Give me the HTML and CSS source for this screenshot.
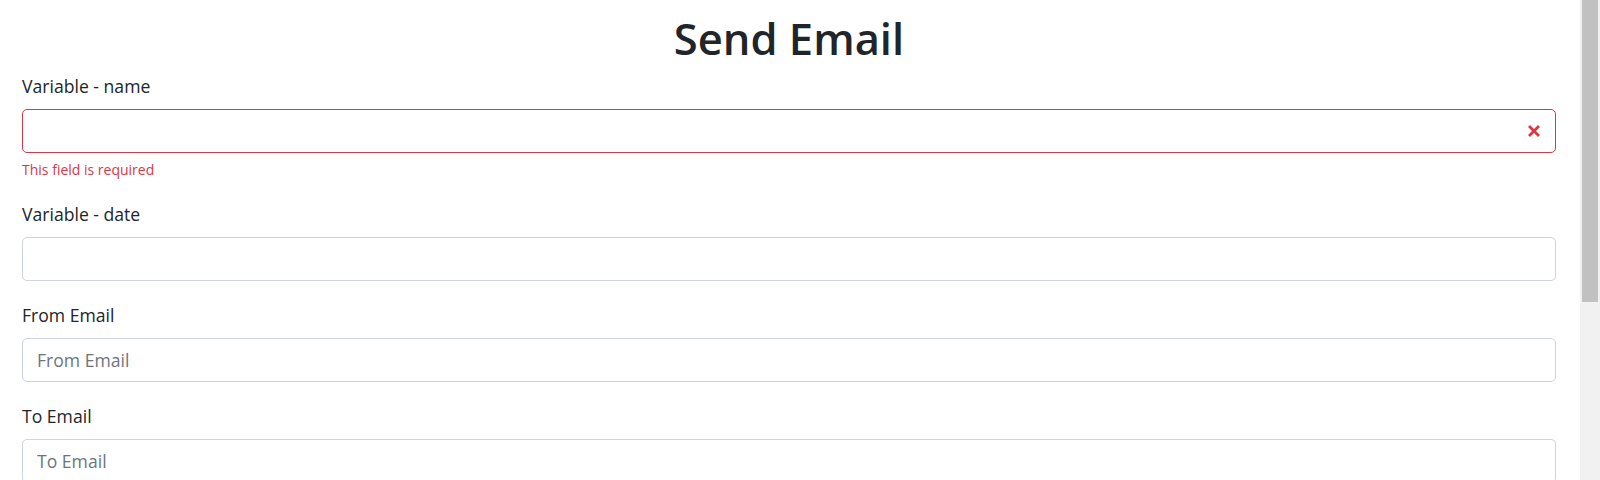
FILE: index.html
```html
<!DOCTYPE html>
<html lang="en">
<head>
<meta charset="utf-8">
<title>Send Email</title>
<link rel="stylesheet" href="styles.css">
</head>
<body>
<div class="page">
  <main class="content">
    <h1 class="title">Send Email</h1>
    <form class="form">
      <div class="group">
        <label class="label" for="v-name">Variable - name</label>
        <div class="field invalid">
          <input class="input" id="v-name" type="text">
          <svg class="invalid-icon" width="12" height="12" viewBox="0 0 12 12" aria-hidden="true">
            <path d="M2 2 L10 10 M10 2 L2 10" stroke="#dc3545" stroke-width="2.8" stroke-linecap="square" fill="none"/>
          </svg>
        </div>
        <div class="feedback">This field is required</div>
      </div>
      <div class="group">
        <label class="label" for="v-date">Variable - date</label>
        <div class="field"><input class="input" id="v-date" type="text"></div>
      </div>
      <div class="group">
        <label class="label" for="from">From Email</label>
        <div class="field"><input class="input" id="from" type="text" placeholder="From Email"></div>
      </div>
      <div class="group">
        <label class="label" for="to">To Email</label>
        <div class="field"><input class="input" id="to" type="text" placeholder="To Email"></div>
      </div>
    </form>
  </main>
  <div class="scrollbar"><div class="thumb"></div></div>
</div>
</body>
</html>
```

FILE: styles.css
```css
html, body {
  margin: 0;
  padding: 0;
  background: #fff;
}
body {
  font-family: "Open Sans", "Noto Sans", "Liberation Sans", sans-serif;
  color: #212529;
  font-size: 16px;
  line-height: 1.5;
}
.page {
  display: flex;
  height: 480px;
  overflow: hidden;
}
.content {
  flex: 1;
  padding: 0 24px 0 22px;
  min-width: 0;
}
.title {
  margin: 0;
  padding-top: 12px;
  height: 64px;
  text-align: center;
  font-size: 43.5px;
  line-height: 54px;
  font-weight: 600;
  color: #212529;
}
.form {
  display: flex;
  flex-direction: column;
}
.group {
  margin-bottom: 24px;
}
.label {
  display: block;
  font-size: 17.6px;
  line-height: 20px;
  margin-bottom: 13px;
}
.field {
  position: relative;
}
.input {
  display: block;
  box-sizing: border-box;
  width: 100%;
  height: 44px;
  padding: 0 14px;
  font-family: inherit;
  font-size: 17.6px;
  color: #212529;
  background: #fff;
  border: 1px solid #ced4da;
  border-radius: 5px;
  outline: none;
}
.input::placeholder {
  color: #6c757d;
}
.invalid .input {
  border-color: #dc3545;
  padding-right: 40px;
}
.invalid-icon {
  position: absolute;
  right: 16px;
  top: 16px;
}
.feedback {
  margin-top: 6px;
  font-size: 14px;
  line-height: 21px;
  color: #dc3545;
}
.scrollbar {
  width: 20px;
  flex: none;
  background: #f1f1f1;
  box-sizing: border-box;
  padding: 0 2px;
}
.thumb {
  height: 302px;
  background: #c1c1c1;
}
```
